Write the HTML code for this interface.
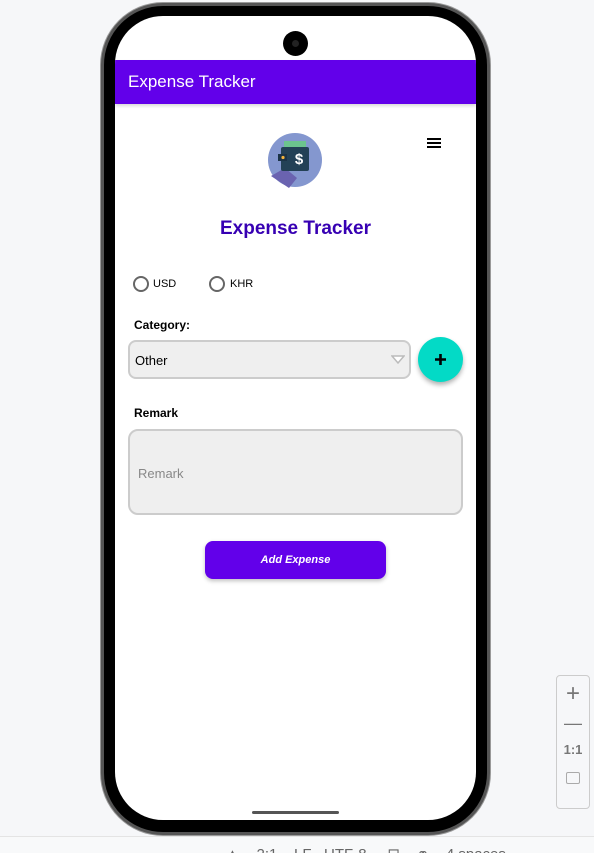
<!DOCTYPE html>
<html><head><meta charset="utf-8"><style>
*{margin:0;padding:0;box-sizing:border-box}
body{width:594px;height:853px;background:#f6f7f9;position:relative;overflow:hidden;font-family:"Liberation Sans",sans-serif}
.phone{position:absolute;left:101px;top:3px;width:389px;height:832px;border-radius:62px;background:#000;border:3px solid #555;box-shadow:0 0 0 1px #999}
.screen{position:absolute;left:115px;top:16px;width:361px;height:804px;border-radius:48px;background:#fff;overflow:hidden}
.cam{position:absolute;left:283px;top:31px;width:25px;height:25px;border-radius:50%;background:#000}
.cam:after{content:"";position:absolute;left:9px;top:9px;width:7px;height:7px;border-radius:50%;background:#222}
.bar{position:absolute;left:0;top:44px;width:361px;height:44px;background:#6200ea;color:#fff;font-size:17px;line-height:44px;padding-left:13px;box-shadow:0 2px 3px rgba(0,0,0,.15)}
.t{position:absolute;color:#000}
.radio{position:absolute;width:16px;height:16px;border:2px solid #666;border-radius:50%}
.sel{position:absolute;left:13px;top:324px;width:283px;height:39px;background:#efefef;border:2px solid #ccc;border-radius:8px}
.fab{position:absolute;left:303px;top:321px;width:45px;height:45px;border-radius:50%;background:#03dac6;box-shadow:0 3px 5px rgba(0,0,0,.3)}
.rem{position:absolute;left:13px;top:413px;width:335px;height:86px;background:#efefef;border:2px solid #ccc;border-radius:10px}
.btn{position:absolute;left:90px;top:525px;width:181px;height:38px;background:#6200ea;border-radius:8px;color:#fff;font-size:11px;font-weight:bold;font-style:italic;text-align:center;line-height:39px;box-shadow:0 2px 4px rgba(0,0,0,.25)}
.home{position:absolute;left:137px;top:795px;width:87px;height:3px;background:#555;border-radius:2px}
.zoom{position:absolute;left:556px;top:675px;width:34px;height:134px;border:1px solid #ccc;border-radius:4px;background:#f6f7f9;color:#777;text-align:center}
.status{position:absolute;left:0;top:836px;width:594px;height:17px;border-top:1px solid #e4e4e4;background:#f8f9fa;font-size:15px;color:#666;overflow:hidden}
</style></head><body>
<div class="phone"></div>
<div class="screen">
<div class="bar">Expense Tracker</div>
<svg style="position:absolute;left:152px;top:116px" width="56" height="56" viewBox="0 0 56 56">
<circle cx="28" cy="28" r="27" fill="#8497cf"/>
<path d="M18 36 L30 46 L22 56 L4 44 Z" fill="#6a63b0"/>
<rect x="17" y="9" width="22" height="10" fill="#6cc48e"/>
<rect x="14" y="15" width="28" height="24" rx="2" fill="#234156"/>
<rect x="11" y="22" width="9" height="7" fill="#1b3347"/>
<circle cx="16" cy="25.5" r="1.6" fill="#f2b33d"/>
<text x="32" y="32" font-size="15" font-weight="bold" fill="#fff" text-anchor="middle" font-family="Liberation Sans">$</text>
</svg>
<div style="position:absolute;left:312px;top:122px;width:14px;height:2px;background:#000;box-shadow:0 4px 0 #000,0 8px 0 #000"></div>
<div class="t" style="left:0;width:361px;text-align:center;top:202px;font-size:19px;font-weight:bold;color:#3700b3">Expense Tracker</div>
<div class="radio" style="left:18px;top:260px"></div><div class="t" style="left:38px;top:262px;font-size:11px">USD</div>
<div class="radio" style="left:94px;top:260px"></div><div class="t" style="left:115px;top:262px;font-size:11px">KHR</div>
<div class="t" style="left:19px;top:302px;font-size:12px;font-weight:bold">Category:</div>
<div class="sel"><div class="t" style="left:5px;top:11px;font-size:13px">Other</div>
<svg style="position:absolute;left:261px;top:13px" width="14" height="10"><path d="M1 1 H13 L7 8 Z" fill="#fff" stroke="#bbb" stroke-width="1.5"/></svg></div>
<div class="fab"><svg style="position:absolute;left:16px;top:16px" width="13" height="13"><path d="M6.5 1V12M1 6.5H12" stroke="#000" stroke-width="2.6"/></svg></div>
<div class="t" style="left:19px;top:390px;font-size:12px;font-weight:bold">Remark</div>
<div class="rem"><div class="t" style="left:8px;top:35px;font-size:13px;color:#888">Remark</div></div>
<div class="btn">Add Expense</div>
<div class="home"></div>
</div>
<div class="cam"></div>
<div class="zoom"><div style="font-size:24px;line-height:32px;margin-top:2px">+</div><div style="font-size:18px;line-height:26px">—</div><div style="font-size:13px;line-height:28px;font-weight:bold">1:1</div><div style="margin:8px auto 0;width:14px;height:12px;border:1px solid #aaa;border-radius:2px"></div></div>
<div class="status"><span style="position:absolute;left:225px;top:8px">▲ &nbsp;&nbsp; 2:1 &nbsp;&nbsp; LF &nbsp; UTF-8 &nbsp;&nbsp;&nbsp; ⊡ &nbsp;&nbsp; ⚭ &nbsp;&nbsp; 4 spaces</span></div>
</body></html>
